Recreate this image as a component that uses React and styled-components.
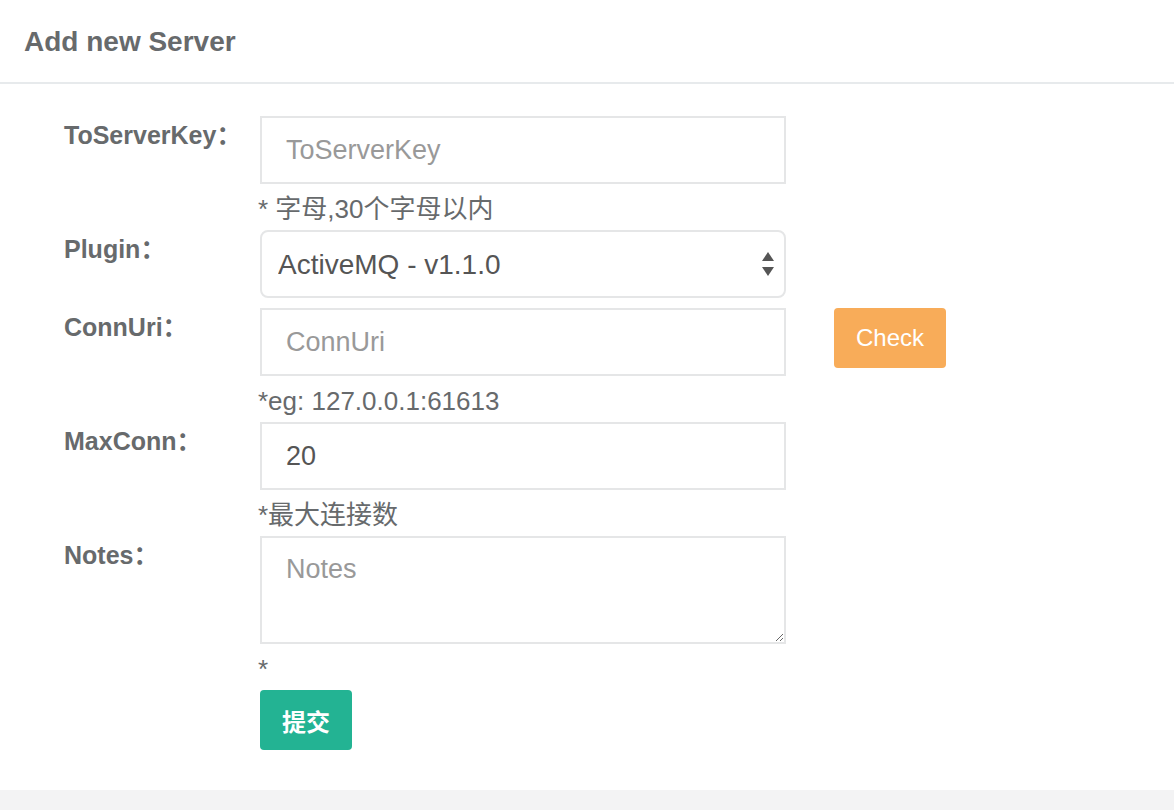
import React from 'react'
import styled, { createGlobalStyle } from 'styled-components'

const GlobalStyle = createGlobalStyle`
  html, body {
    margin: 0;
    padding: 0;
    background: #f3f3f4;
    font-family: "Liberation Sans", Arial, "Noto Sans CJK SC", sans-serif;
    color: #676a6c;
  }
`

const Panel = styled.div`
  background: #fff;
  min-height: 790px;
  box-sizing: border-box;
`

const Header = styled.div`
  height: 84px;
  border-bottom: 2px solid #e7eaec;
  display: flex;
  align-items: center;
  padding: 0 24px;
  box-sizing: border-box;
  h5 {
    margin: 0;
    font-size: 28px;
    font-weight: bold;
    color: #676a6c;
    padding-top: 1px;
  }
`

const Form = styled.form`
  padding: 32px 0 40px 64px;
  display: flex;
  flex-direction: column;
  gap: 10px;
`

const Row = styled.div`
  display: flex;
  align-items: flex-start;
`

const Label = styled.label`
  width: 196px;
  flex-shrink: 0;
  padding-top: 6px;
  line-height: 26px;
  font-size: 25px;
  font-weight: bold;
  color: #676a6c;
  white-space: nowrap;
  font-family: "Liberation Sans", Arial, "Noto Sans CJK SC", sans-serif;
`

const Field = styled.div`
  width: 526px;
  display: flex;
  flex-direction: column;
`

const baseControl = `
  width: 100%;
  box-sizing: border-box;
  border: 2px solid #e5e6e7;
  background: #fff;
  font-family: "Liberation Sans", Arial, "Noto Sans CJK SC", sans-serif;
  font-size: 27px;
  color: #555;
  outline: none;
  &::placeholder { color: #999; }
`

const Input = styled.input`
  ${baseControl}
  height: 68px;
  padding: 0 24px;
`

const TextArea = styled.textarea`
  ${baseControl}
  height: 108px;
  padding: 16px 24px;
  resize: vertical;
  display: block;
`

const SelectWrap = styled.div`
  position: relative;
  svg {
    position: absolute;
    right: 10px;
    top: 20px;
    pointer-events: none;
  }
`

const Select = styled.select`
  ${baseControl}
  appearance: none;
  -webkit-appearance: none;
  height: 68px;
  padding: 0 40px 0 16px;
  border-radius: 8px;
  font-size: 28px;
  color: #555;
`

const Hint = styled.div`
  margin-top: 14px;
  line-height: 22px;
  font-size: 26px;
  color: #676a6c;
  margin-left: -2px;
`

const Button = styled.button`
  border: none;
  border-radius: 4px;
  height: 60px;
  padding: 0 ${(p) => p.$pad}px;
  background: ${(p) => p.$bg};
  color: #fff;
  font-size: 24px;
  font-weight: ${(p) => (p.$bold ? 'bold' : 'normal')};
  font-family: "Liberation Sans", Arial, "Noto Sans CJK SC", sans-serif;
  cursor: pointer;
`

const Side = styled.div`
  margin-left: 48px;
`

const Actions = styled.div`
  padding-left: 196px;
`

const Arrows = () => (
  <svg width="16" height="28" viewBox="0 0 16 28">
    <path d="M8 2 L14 11 L2 11 Z" fill="#555" />
    <path d="M8 26 L14 17 L2 17 Z" fill="#555" />
  </svg>
)

export default function App() {
  return (
    <>
      <GlobalStyle />
      <Panel>
        <Header>
          <h5>Add new Server</h5>
        </Header>
        <Form onSubmit={(e) => e.preventDefault()}>
          <Row>
            <Label>ToServerKey：</Label>
            <Field>
              <Input placeholder="ToServerKey" />
              <Hint>* 字母,30个字母以内</Hint>
            </Field>
          </Row>
          <Row>
            <Label>Plugin：</Label>
            <Field>
              <SelectWrap>
                <Select defaultValue="activemq">
                  <option value="activemq">ActiveMQ - v1.1.0</option>
                </Select>
                <Arrows />
              </SelectWrap>
            </Field>
          </Row>
          <Row>
            <Label>ConnUri：</Label>
            <Field>
              <Input placeholder="ConnUri" />
              <Hint>*eg: 127.0.0.1:61613</Hint>
            </Field>
            <Side>
              <Button type="button" $bg="#f8ac59" $pad={22}>Check</Button>
            </Side>
          </Row>
          <Row>
            <Label>MaxConn：</Label>
            <Field>
              <Input defaultValue="20" />
              <Hint>*最大连接数</Hint>
            </Field>
          </Row>
          <Row>
            <Label>Notes：</Label>
            <Field>
              <TextArea placeholder="Notes" />
              <Hint>*</Hint>
            </Field>
          </Row>
          <Actions>
            <Button type="submit" $bg="#23b393" $pad={22} $bold>提交</Button>
          </Actions>
        </Form>
      </Panel>
    </>
  )
}
